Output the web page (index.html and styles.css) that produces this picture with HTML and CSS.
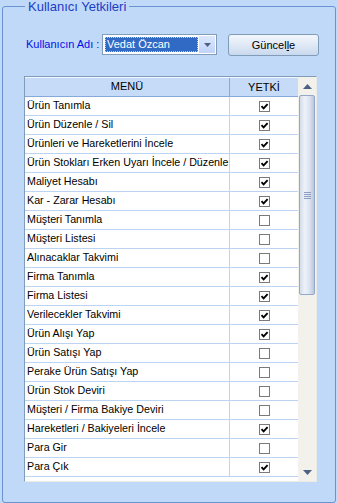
FILE: index.html
```html
<!DOCTYPE html>
<html lang="tr">
<head>
    <meta charset="UTF-8">
    <title>Kullanıcı Yetkileri</title>
    <link rel="stylesheet" href="styles.css">
</head>
<body>
    <fieldset class="group">
        <legend>Kullanıcı Yetkileri</legend>

        <div class="user-row">
            <label class="user-label">Kullanıcın Adı :</label>
            <div class="combo">
                <span class="combo-value">Vedat Özcan</span>
                <span class="combo-btn">
                    <svg width="7" height="4" viewBox="0 0 7 4"><path d="M0 0h7L3.5 4z" fill="#4d6185"/></svg>
                </span>
            </div>
            <button class="btn">Güncel<u>l</u>e</button>
        </div>

        <div class="grid">
            <div class="grid-main">
                <div class="grid-head">
                    <div class="cell-menu">MENÜ</div>
                    <div class="cell-check">YETKİ</div>
                </div>
                <div class="grid-row"><div class="cell-menu">Ürün Tanımla</div><div class="cell-check"><span class="box on"></span></div></div>
                <div class="grid-row"><div class="cell-menu">Ürün Düzenle / Sil</div><div class="cell-check"><span class="box on"></span></div></div>
                <div class="grid-row"><div class="cell-menu">Ürünleri ve Hareketlerini İncele</div><div class="cell-check"><span class="box on"></span></div></div>
                <div class="grid-row"><div class="cell-menu">Ürün Stokları Erken Uyarı İncele / Düzenle</div><div class="cell-check"><span class="box on"></span></div></div>
                <div class="grid-row"><div class="cell-menu">Maliyet Hesabı</div><div class="cell-check"><span class="box on"></span></div></div>
                <div class="grid-row"><div class="cell-menu">Kar - Zarar Hesabı</div><div class="cell-check"><span class="box on"></span></div></div>
                <div class="grid-row"><div class="cell-menu">Müşteri Tanımla</div><div class="cell-check"><span class="box"></span></div></div>
                <div class="grid-row"><div class="cell-menu">Müşteri Listesi</div><div class="cell-check"><span class="box"></span></div></div>
                <div class="grid-row"><div class="cell-menu">Alınacaklar Takvimi</div><div class="cell-check"><span class="box"></span></div></div>
                <div class="grid-row"><div class="cell-menu">Firma Tanımla</div><div class="cell-check"><span class="box on"></span></div></div>
                <div class="grid-row"><div class="cell-menu">Firma Listesi</div><div class="cell-check"><span class="box on"></span></div></div>
                <div class="grid-row"><div class="cell-menu">Verilecekler Takvimi</div><div class="cell-check"><span class="box on"></span></div></div>
                <div class="grid-row"><div class="cell-menu">Ürün Alışı Yap</div><div class="cell-check"><span class="box on"></span></div></div>
                <div class="grid-row"><div class="cell-menu">Ürün Satışı Yap</div><div class="cell-check"><span class="box"></span></div></div>
                <div class="grid-row"><div class="cell-menu">Perake Ürün Satışı Yap</div><div class="cell-check"><span class="box"></span></div></div>
                <div class="grid-row"><div class="cell-menu">Ürün Stok Deviri</div><div class="cell-check"><span class="box"></span></div></div>
                <div class="grid-row"><div class="cell-menu">Müşteri / Firma Bakiye Deviri</div><div class="cell-check"><span class="box"></span></div></div>
                <div class="grid-row"><div class="cell-menu">Hareketleri / Bakiyeleri İncele</div><div class="cell-check"><span class="box on"></span></div></div>
                <div class="grid-row"><div class="cell-menu">Para Gir</div><div class="cell-check"><span class="box"></span></div></div>
                <div class="grid-row"><div class="cell-menu">Para Çık</div><div class="cell-check"><span class="box on"></span></div></div>
            </div>

            <div class="scrollbar">
                <div class="sb-arrow">
                    <svg width="9" height="5" viewBox="0 0 9 5"><path d="M4.5 0L9 5H0z" fill="#4d6185"/></svg>
                </div>
                <div class="sb-thumb">
                    <span class="grip"></span>
                </div>
                <div class="sb-track"></div>
                <div class="sb-arrow">
                    <svg width="9" height="5" viewBox="0 0 9 5"><path d="M0 0h9L4.5 5z" fill="#4d6185"/></svg>
                </div>
            </div>
        </div>
    </fieldset>
</body>
</html>
```

FILE: styles.css
```css
body {
    margin: 0;
    background: #c0d9f8;
    font-family: "Liberation Sans", Arial, sans-serif;
    font-size: 11px;
    color: #000;
}

.group {
    margin: 0 2px;
    padding: 0 0 20px 0;
    border: 1px solid #6a93d4;
    border-radius: 3px;
}
.group legend {
    margin-left: 22px;
    padding: 0 3px;
    font-size: 13px;
    line-height: 13px;
    color: #1c3cc4;
}

/* user selector row */
.user-row {
    display: flex;
    align-items: flex-start;
    margin-top: 21px;
    margin-left: 23px;
}
.user-label {
    width: 76px;
    line-height: 21px;
    color: #0010e8;
}
.combo {
    display: flex;
    width: 115px;
    height: 21px;
    box-sizing: border-box;
    border: 1px solid #7f9db9;
    background: #fff;
    padding: 2px 1px 2px 2px;
}
.combo-value {
    flex: 1;
    background: #316ac5;
    color: #fff;
    outline: 1px dotted #f4d44a;
    outline-offset: -1px;
    line-height: 15px;
    padding-left: 2px;
    margin-right: 1px;
    white-space: nowrap;
    overflow: hidden;
}
.combo-btn {
    width: 16px;
    margin: -1px 0;
    display: flex;
    align-items: center;
    justify-content: center;
    background: linear-gradient(#dce8fd, #c0d3f8);
}
.btn {
    margin-left: 11px;
    width: 91px;
    height: 22px;
    border: 1px solid #7f9db9;
    border-radius: 3px;
    background: linear-gradient(#f3f7fc, #dbe6f4 60%, #c9d8ee);
    font-family: "Liberation Sans", Arial, sans-serif;
    font-size: 11px;
    color: #000;
    padding: 0;
}

/* permission grid */
.grid {
    display: flex;
    width: 293px;
    height: 406px;
    box-sizing: border-box;
    margin: 20px 0 0 21px;
    border: 1px solid #7f9db9;
    border-right-color: #ecebe3;
    border-bottom-color: #ecebe3;
    background: #fff;
    font-size: 10.7px;
}
.grid-main {
    width: 273px;
    overflow: hidden;
}
.grid-head, .grid-row {
    display: flex;
    box-sizing: border-box;
}
.grid-head {
    height: 20px;
    background: #c5dbf8;
    border-top: 1px solid #f2f7fe;
    border-bottom: 1px solid #86a9dc;
    text-align: center;
    line-height: 17px;
    font-size: 11px;
}
.grid-head .cell-menu { border-right-color: #86a9dc; }
.grid-row {
    height: 19px;
    border-bottom: 1px solid #bcd4f4;
    line-height: 17px;
}
.cell-menu {
    width: 205px;
    box-sizing: border-box;
    border-right: 1px solid #bcd4f4;
    padding-left: 2px;
    white-space: nowrap;
    overflow: hidden;
}
.grid-head .cell-menu { padding-left: 0; }
.cell-check {
    width: 68px;
    display: flex;
    align-items: center;
    justify-content: center;
}
.box {
    width: 11px;
    height: 11px;
    box-sizing: border-box;
    border: 1px solid #7a7a7a;
    background: #fff;
}
.box.on {
    background: #fff url("data:image/svg+xml;utf8,<svg xmlns='http://www.w3.org/2000/svg' width='9' height='9'><path d='M1.5 4.2L3.6 6.3L7.6 2.2' fill='none' stroke='black' stroke-width='1.9'/></svg>") no-repeat center;
}

/* scrollbar */
.scrollbar {
    width: 18px;
    display: flex;
    flex-direction: column;
    background: #f2f1ec;
}
.sb-arrow {
    height: 18px;
    display: flex;
    align-items: center;
    justify-content: center;
}
.sb-thumb {
    height: 200px;
    margin: 0 1px 0 1px;
    box-sizing: border-box;
    border: 1px solid #95a8cc;
    border-radius: 2px;
    background: linear-gradient(90deg, #d4dcea, #eef2f9 35%, #dde5f1 65%, #b9c6dc);
    display: flex;
    align-items: center;
    justify-content: center;
}
.grip {
    width: 7px;
    height: 7px;
    background: repeating-linear-gradient(#8c9dbf 0 1px, transparent 1px 2px);
}
.sb-track {
    flex: 1;
}
```
